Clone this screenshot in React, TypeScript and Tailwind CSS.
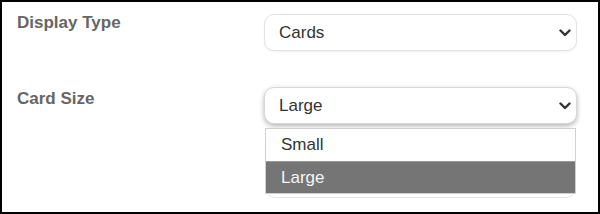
import React from "react";

function Chevron() {
  return (
    <svg width="12" height="8" viewBox="0 0 12 8" className="shrink-0">
      <path d="M1.5 1.5 L6 6 L10.5 1.5" fill="none" stroke="#333" strokeWidth="2.4" strokeLinecap="round" strokeLinejoin="round" />
    </svg>
  );
}

function FakeSelect({ value, open }: { value: string; open?: boolean }) {
  return (
    <div
      className={
        "flex items-center justify-between h-[37px] rounded-[10px] border bg-white pl-[14px] pr-[5px] " +
        (open
          ? "border-[#d8d8d8] shadow-[0_2px_5px_rgba(0,0,0,0.3)]"
          : "border-[#e2e2e2] shadow-[0_1px_2px_rgba(0,0,0,0.06)]")
      }
    >
      <span className="text-[17px] leading-5 text-[#333]">{value}</span>
      <Chevron />
    </div>
  );
}

export default function App() {
  return (
    <div
      className="w-[600px] h-[214px] border-2 border-black bg-white overflow-hidden"
      style={{ fontFamily: '"Liberation Sans", Arial, sans-serif' }}
    >
      <div className="grid grid-cols-[247px_313px] pl-[15px] pt-[12px] gap-y-[36px]">
        <div className="text-[17px] leading-4 font-bold text-[#666] pt-[1px]">Display Type</div>
        <FakeSelect value="Cards" />
        <div className="text-[17px] leading-4 font-bold text-[#666] pt-[4px]">Card Size</div>
        <div className="relative">
          <FakeSelect value="Large" open />
          <div className="absolute left-[1px] right-[1px] top-[41px] h-[70px] rounded-b-[10px] border border-[#e6e6e6] bg-white" />
          <div className="absolute left-[1px] right-[1px] top-[41px] border border-[#d0d0d0] bg-white">
            <div className="h-[32px] flex items-center pl-[15px] text-[17px] text-[#333]">Small</div>
            <div className="h-[32px] flex items-center pl-[15px] text-[17px] text-[#f4f4f4] bg-[#757575] border-t border-[#9a9a9a]">Large</div>
          </div>
        </div>
      </div>
    </div>
  );
}
